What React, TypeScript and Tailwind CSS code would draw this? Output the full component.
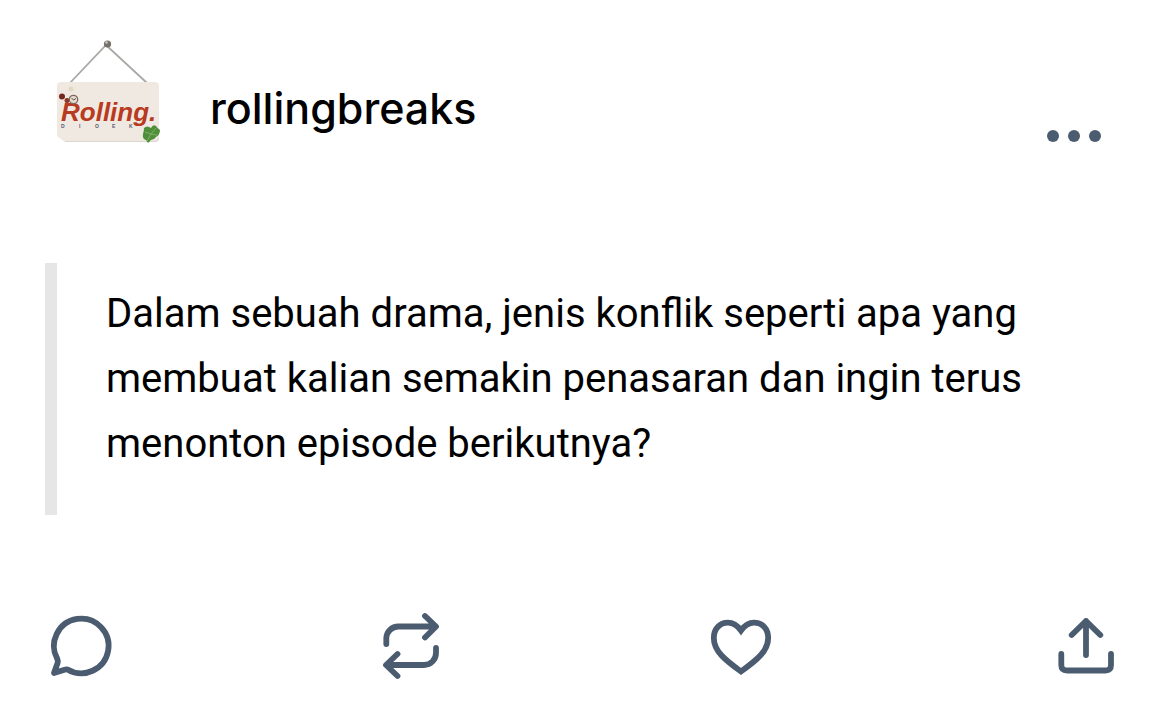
import type { ReactNode } from 'react';

interface IconProps {
  children: ReactNode;
}

function ActionIcon({ children }: IconProps) {
  return (
    <svg
      viewBox="0 0 66 66"
      className="h-[66px] w-[66px] overflow-visible"
      fill="none"
      stroke="currentColor"
      strokeWidth="5.8"
      strokeLinecap="round"
      aria-hidden="true"
    >
      {children}
    </svg>
  );
}

function Avatar() {
  return (
    <svg viewBox="0 0 104 104" className="h-[104px] w-[104px] shrink-0" role="img" aria-label="rollingbreaks">
      {/* String and nail */}
      <path d="M13 44 50 5 91 43" fill="none" stroke="#aaa7a4" strokeWidth="1.8" />
      <circle cx="51.5" cy="4" r="3.6" fill="#77706a" />
      <circle cx="50.5" cy="2.5" r="1.3" fill="#c9c4be" />
      {/* Board */}
      <path d="M5 42H99Q103 42 103 46V98Q103 102 99 102H9L1 96V46Q1 42 5 42Z" fill="#f0e9e2" />
      <path d="M9 101.5H99Q102.5 101.5 102.5 98" fill="none" stroke="#dcd5cd" />
      {/* Berries and clock */}
      <circle cx="6" cy="56.5" r="3" fill="#74281f" />
      <circle cx="11" cy="60.5" r="2.5" fill="#8d3527" />
      <circle cx="15" cy="49" r="2.5" fill="#e3d8c0" />
      <g fill="#565b78" fontFamily="Liberation Sans, sans-serif" fontSize="5" fontWeight="700">
        <text x="5" y="88">D</text>
        <text x="23" y="88">I</text>
        <text x="39" y="88">O</text>
        <text x="56" y="88">E</text>
        <text x="73" y="88">K</text>
      </g>
      <text
        x="5"
        y="81"
        fill="#b83a20"
        fontFamily="Liberation Sans, sans-serif"
        fontSize="26"
        fontStyle="italic"
        fontWeight="700"
      >
        Rolling.
      </text>
      <circle cx="17.5" cy="59.5" r="4.2" fill="#e6ddd0" stroke="#7d6a5c" strokeWidth="1.3" />
      <path d="M15.5 58 17.5 60 20 58.5" fill="none" stroke="#5d5048" />
      {/* Leaf */}
      <path
        d="M88 88Q91 85 95 88Q97 84 100 86Q101 88 104 90Q104 95 100 97Q98 100 95 100L92 103 90 100Q86 99 87 94Q88 91 88 88Z"
        fill="#4f8f3a"
      />
      <path d="M91 101 95 94 100 88M95 94 89 92M95 94 101 95" fill="none" stroke="#86b66c" strokeWidth="0.8" />
    </svg>
  );
}

export default function App() {
  return (
    <article className="w-full bg-white pt-10 pb-8 font-['Roboto',sans-serif] text-black">
      <header className="flex items-end pr-[69px] pl-14">
        <Avatar />
        <a href="#rollingbreaks" className="ml-[50px] pb-3 font-['Inter',sans-serif] text-[43px] leading-[48px] font-medium">
          rollingbreaks
        </a>
        <button type="button" aria-label="More options" className="mb-0.5 ml-auto text-[#4c5c70]">
          <svg viewBox="0 0 54 12" className="h-3 w-[54px]" fill="currentColor" aria-hidden="true">
            <circle cx="6" cy="6" r="6" />
            <circle cx="27" cy="6" r="6" />
            <circle cx="48" cy="6" r="6" />
          </svg>
        </button>
      </header>

      <blockquote className="mx-[45px] mt-[119px] border-l-12 border-[#e6e6e6] pt-[18px] pb-[39px] pl-[49px] text-[40px] leading-[65px]">
        <p>Dalam sebuah drama, jenis konflik seperti apa yang membuat kalian semakin penasaran dan ingin terus menonton episode berikutnya?</p>
      </blockquote>

      <footer className="mt-[98px] flex justify-between pr-[51px] pl-12 text-[#4c5c70]">
        <button type="button" aria-label="Reply">
          <ActionIcon>
            <path
              d="M9.3 46A27.3 27.3 0 1 1 19.5 56.5Q18.3 56 16.5 56.8L6 60 9.6 50Q10.2 48 9.3 46Z"
              strokeLinejoin="round"
            />
          </ActionIcon>
        </button>
        <button type="button" aria-label="Reblog">
          <ActionIcon>
            <path d="M8.3 31V25A12 12 0 0 1 20.3 13.5H57M47 3 58 13.5 47 24.5" strokeLinejoin="round" />
            <path d="M58 35V40A12 12 0 0 1 46 52H9M19.5 41 8 52 19.5 63" strokeLinejoin="round" />
          </ActionIcon>
        </button>
        <button type="button" aria-label="Like">
          <ActionIcon>
            <path d="M33 17.5C29 12 25 9.7 20 9.7C11.5 9.7 5.8 16 5.8 25C5.8 38 17 47 33 58.5C49 47 60.2 38 60.2 25C60.2 16 54.5 9.7 46 9.7C41 9.7 37 12 33 17.5Z" />
          </ActionIcon>
        </button>
        <button type="button" aria-label="Share" className="pl-[15px]">
          <ActionIcon>
            <path d="M33 8V42M18.7 22 33 8 47.3 22" strokeLinejoin="round" />
            <path d="M8.3 41V52Q8.3 57.5 14 57.5H52.5Q58 57.5 58 52V41" />
          </ActionIcon>
        </button>
      </footer>
    </article>
  );
}
